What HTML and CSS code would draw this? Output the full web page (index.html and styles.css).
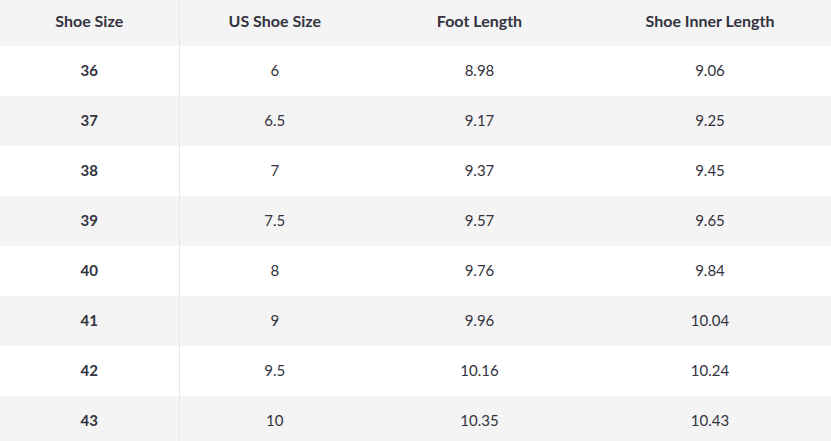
FILE: index.html
```html
<!DOCTYPE html>
<html>
<head>
<meta charset="utf-8">
<link rel="stylesheet" href="styles.css">
</head>
<body>
<table class="size-table">
  <colgroup>
    <col class="c1"><col class="c2"><col class="c3"><col class="c4">
  </colgroup>
  <thead>
    <tr><th>Shoe Size</th><th>US Shoe Size</th><th>Foot Length</th><th>Shoe Inner Length</th></tr>
  </thead>
  <tbody>
    <tr><td class="eu">36</td><td>6</td><td>8.98</td><td>9.06</td></tr>
    <tr><td class="eu">37</td><td>6.5</td><td>9.17</td><td>9.25</td></tr>
    <tr><td class="eu">38</td><td>7</td><td>9.37</td><td>9.45</td></tr>
    <tr><td class="eu">39</td><td>7.5</td><td>9.57</td><td>9.65</td></tr>
    <tr><td class="eu">40</td><td>8</td><td>9.76</td><td>9.84</td></tr>
    <tr><td class="eu">41</td><td>9</td><td>9.96</td><td>10.04</td></tr>
    <tr><td class="eu">42</td><td>9.5</td><td>10.16</td><td>10.24</td></tr>
    <tr><td class="eu">43</td><td>10</td><td>10.35</td><td>10.43</td></tr>
  </tbody>
</table>
</body>
</html>
```
FILE: styles.css
```css
html, body {
  margin: 0;
  padding: 0;
  background: #ffffff;
}
body {
  font-family: Lato, "Noto Sans", sans-serif;
  color: #333340;
}
.size-table {
  width: 831px;
  border-collapse: collapse;
  table-layout: fixed;
}
.c1 { width: 179px; }
.c2 { width: 191px; }
.c3 { width: 219px; }
.c4 { width: 242px; }
.size-table th,
.size-table td {
  text-align: center;
  padding: 0;
  box-sizing: border-box;
}
.size-table th {
  height: 46px;
  padding-bottom: 6px;
  font-size: 16px;
  font-weight: 700;
  background: #f4f4f4;
}
.size-table td {
  height: 50px;
  padding-bottom: 3px;
  font-size: 15px;
  font-weight: 400;
}
.size-table tbody tr:nth-child(even) td {
  background: #f4f4f4;
}
.size-table th:first-child,
.size-table td:first-child {
  border-right: 1px solid #e6e6e6;
}
.size-table td.eu {
  font-weight: 700;
}
```
